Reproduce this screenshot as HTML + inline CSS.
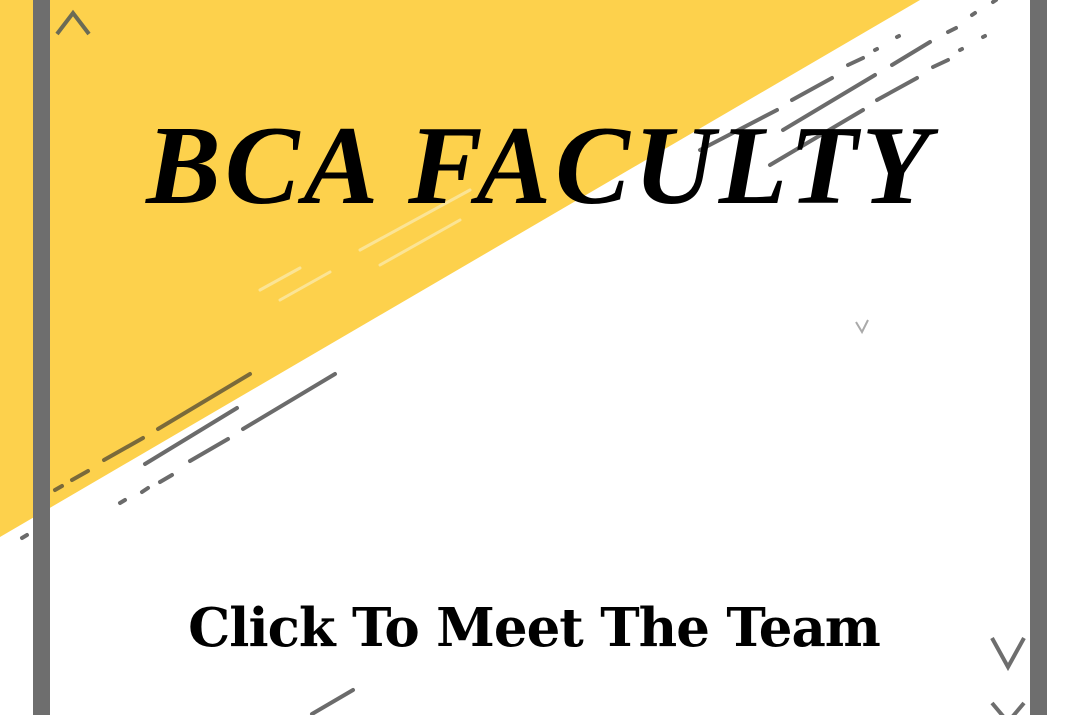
<!DOCTYPE html>
<html><head><meta charset="utf-8"><style>
html,body{margin:0;padding:0;}
body{width:1080px;height:715px;position:relative;overflow:hidden;background:#fff;}
svg{position:absolute;left:0;top:0;}
.t1{position:absolute;left:0;width:1080px;top:110px;text-align:center;font-family:"Liberation Serif",serif;font-style:italic;font-weight:bold;font-size:112px;letter-spacing:4px;color:#000;line-height:1;}
.t2{position:absolute;left:0;width:1068px;top:602px;text-align:center;font-family:"DejaVu Serif","Liberation Serif",serif;font-weight:bold;font-size:53px;color:#000;line-height:1;letter-spacing:-1px;}
</style></head><body>
<svg width="1080" height="715" viewBox="0 0 1080 715">
<polygon points="0,0 920,0 0,537" fill="#fdd14c"/>
<g stroke="#6b6b6b" stroke-width="4" stroke-linecap="round" fill="none">
<line x1="55" y1="490" x2="62" y2="486" stroke="#7a6a3a"/>
<line x1="72" y1="480" x2="88" y2="471" stroke="#7a6a3a"/>
<line x1="104" y1="460" x2="143" y2="438" stroke="#7a6a3a"/>
<line x1="158" y1="429" x2="250" y2="374" stroke="#7a6a3a"/>
<line x1="145" y1="464" x2="237" y2="408"/>
<line x1="190" y1="461" x2="228" y2="439"/>
<line x1="243" y1="429" x2="335" y2="374"/>
<line x1="120" y1="503" x2="125" y2="500"/>
<line x1="142" y1="492" x2="148" y2="488"/>
<line x1="160" y1="482" x2="172" y2="475"/>
<line x1="22" y1="538" x2="27" y2="535"/>
<line x1="700" y1="150" x2="777" y2="110"/>
<line x1="792" y1="100" x2="832" y2="78"/>
<line x1="848" y1="65" x2="863" y2="58"/>
<line x1="875" y1="50" x2="877" y2="49"/>
<line x1="897" y1="37" x2="899" y2="36"/>
<line x1="783" y1="130" x2="875" y2="75"/>
<line x1="892" y1="65" x2="930" y2="42"/>
<line x1="948" y1="32" x2="956" y2="28"/>
<line x1="972" y1="15" x2="975" y2="13"/>
<line x1="993" y1="2" x2="996" y2="0"/>
<line x1="770" y1="165" x2="863" y2="110"/>
<line x1="877" y1="100" x2="917" y2="78"/>
<line x1="933" y1="67" x2="948" y2="60"/>
<line x1="960" y1="50" x2="962" y2="49"/>
<line x1="983" y1="37" x2="985" y2="36"/>
<line x1="312" y1="714" x2="353" y2="690"/>
</g>
<g stroke="#fbe9a8" stroke-width="3" stroke-linecap="round" opacity="0.8">
<line x1="360" y1="250" x2="470" y2="190"/>
<line x1="380" y1="265" x2="460" y2="220"/>
<line x1="260" y1="290" x2="300" y2="268"/>
<line x1="280" y1="300" x2="330" y2="272"/>
</g>
<rect x="33" y="0" width="17" height="715" fill="#6e6e6e"/>
<rect x="1030" y="0" width="17" height="715" fill="#6e6e6e"/>
<polyline points="57,34 73,13 89,34" stroke="#6b6b55" stroke-width="4" fill="none"/>
<polyline points="992,638 1008,667 1024,638" stroke="#6e6e6e" stroke-width="4" fill="none"/>
<polyline points="992,703 1008,722 1024,703" stroke="#6e6e6e" stroke-width="4" fill="none"/>
<polyline points="856,322 862,332 868,320" stroke="#aaa" stroke-width="2" fill="none"/>
</svg>
<div class="t1">BCA FACULTY</div>
<div class="t2">Click To Meet The Team</div>
</body></html>
